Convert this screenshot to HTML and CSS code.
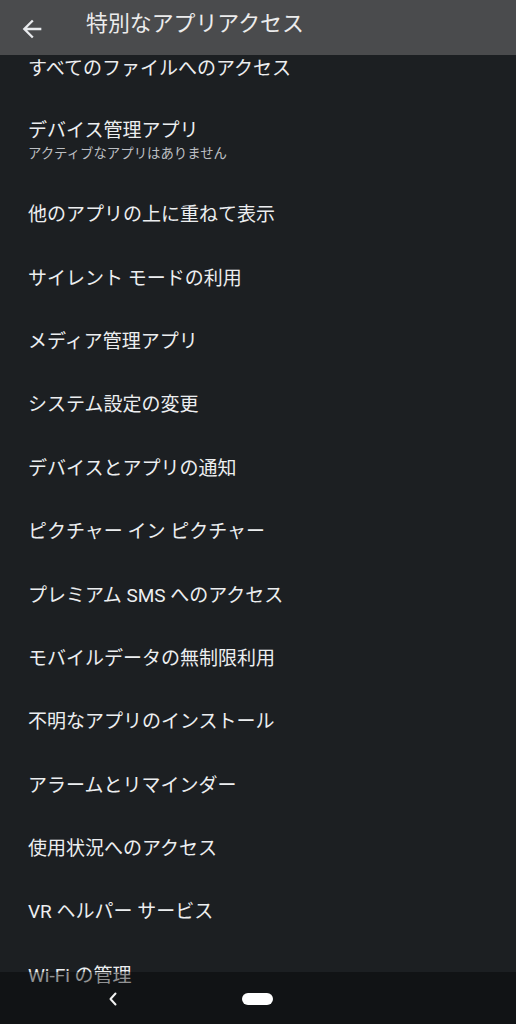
FILE: index.html
```html
<!DOCTYPE html>
<html lang="ja">
<head>
<meta charset="utf-8">
<title>特別なアプリアクセス</title>
<link rel="stylesheet" href="styles.css">
</head>
<body>
<header class="appbar">
  <span class="back">
    <svg viewBox="0 0 24 24" width="28" height="28"><path d="M20 11H7.83l5.59-5.59L12 4l-8 8 8 8 1.41-1.41L7.83 13H20v-2z" fill="#e8eaed"/></svg>
  </span>
  <h1 class="title">特別なアプリアクセス</h1>
</header>
<ul class="list">
  <li class="row"><span class="label">すべてのファイルへのアクセス</span></li>
  <li class="row row-two"><span class="label">デバイス管理アプリ</span><span class="sub">アクティブなアプリはありません</span></li>
  <li class="row"><span class="label">他のアプリの上に重ねて表示</span></li>
  <li class="row"><span class="label">サイレント モードの利用</span></li>
  <li class="row"><span class="label">メディア管理アプリ</span></li>
  <li class="row"><span class="label">システム設定の変更</span></li>
  <li class="row"><span class="label">デバイスとアプリの通知</span></li>
  <li class="row"><span class="label">ピクチャー イン ピクチャー</span></li>
  <li class="row"><span class="label">プレミアム SMS へのアクセス</span></li>
  <li class="row"><span class="label">モバイルデータの無制限利用</span></li>
  <li class="row"><span class="label">不明なアプリのインストール</span></li>
  <li class="row"><span class="label">アラームとリマインダー</span></li>
  <li class="row"><span class="label">使用状況へのアクセス</span></li>
  <li class="row"><span class="label">VR ヘルパー サービス</span></li>
  <li class="row"><span class="label">Wi-Fi の管理</span></li>
</ul>
<nav class="navbar">
  <span class="nav-back">
    <svg viewBox="0 0 10 14" width="10" height="14"><path d="M7.5 1.5L2.5 7l5 5.5" fill="none" stroke="#f2f2f2" stroke-width="2" stroke-linecap="round" stroke-linejoin="round"/></svg>
  </span>
  <span class="pill"></span>
</nav>
</body>
</html>
```
FILE: styles.css
```css
html, body {
  margin: 0;
  padding: 0;
}
body {
  width: 516px;
  height: 1024px;
  overflow: hidden;
  background: #1c1f22;
  font-family: Roboto, "Noto Sans CJK JP", sans-serif;
  color: #eceef0;
}
.appbar {
  position: fixed;
  top: 0;
  left: 0;
  right: 0;
  height: 55px;
  background: #4a4b4d;
  display: flex;
  align-items: center;
  z-index: 2;
}
.back {
  width: 28px;
  height: 28px;
  margin-left: 18px;
  margin-top: 2px;
  display: flex;
}
.title {
  margin: 0 0 0 40px;
  font-size: 21.9px;
  font-weight: 400;
  color: #ececec;
  line-height: 28px;
  margin-top: -7px;
}
.list {
  list-style: none;
  margin: 37px 0 0 0;
  padding: 0;
}
.row {
  height: 63.4px;
  padding-left: 28px;
  display: flex;
  flex-direction: column;
  justify-content: center;
}
.row-two {
  height: 83.1px;
}
.label {
  font-size: 19px;
  line-height: 24px;
  color: #eceef0;
}
.sub {
  font-size: 13.4px;
  line-height: 22px;
  color: #bcbfc3;
}
.navbar {
  position: fixed;
  left: 0;
  right: 0;
  bottom: 0;
  height: 52px;
  background: rgba(0, 0, 0, 0.38);
  display: flex;
  align-items: center;
  z-index: 2;
}
.nav-back {
  display: flex;
  margin-left: 108px;
  margin-top: 2px;
}
.pill {
  width: 31px;
  height: 12px;
  border-radius: 6px;
  background: #ffffff;
  margin-left: 124px;
  margin-top: 2px;
}
```
